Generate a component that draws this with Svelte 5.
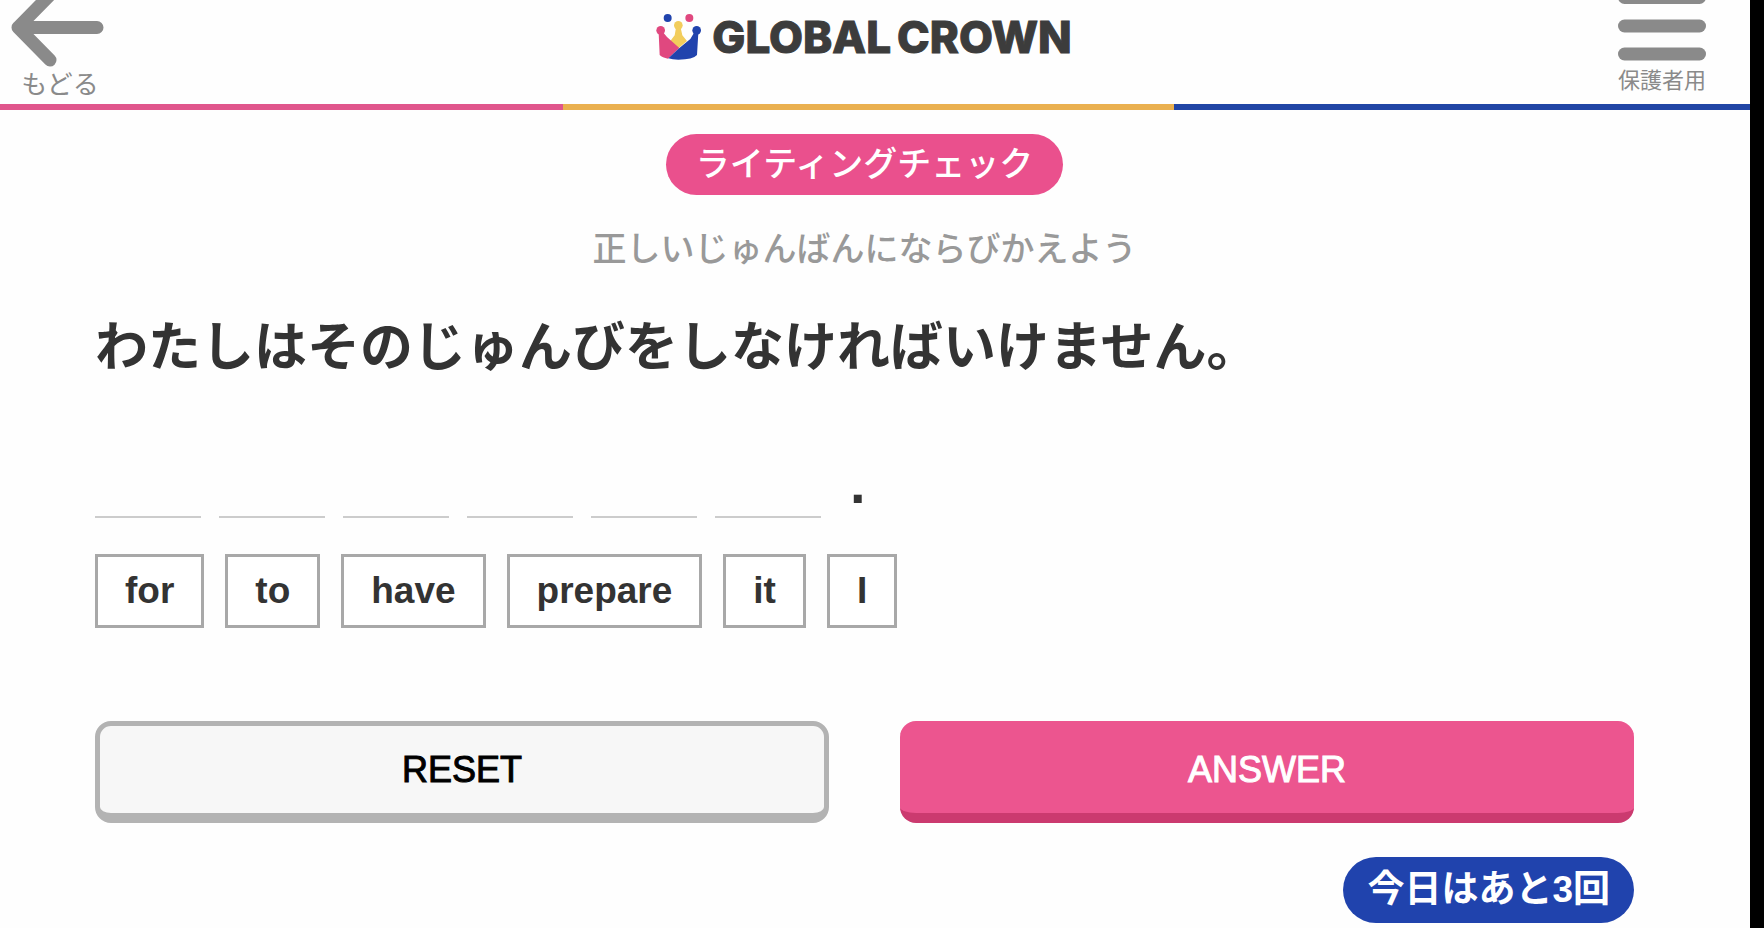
<script lang="ts">
  type Tile = { id: number; word: string }

  const tiles: Tile[] = ['for', 'to', 'have', 'prepare', 'it', 'I'].map((word, id) => ({ id, word }))
  const remaining = 3

  let picked: Tile[] = $state([])
  let rest = $derived(tiles.filter((tile) => !picked.some((p) => p.id === tile.id)))

  function pick(tile: Tile) {
    picked.push(tile)
  }

  function reset() {
    picked = []
  }
</script>

<div class="page">
  <header>
    <a class="back" href="#back">
      <svg width="94" height="68" viewBox="0 0 94 68" aria-hidden="true">
        <path d="M87 27.500H8L39 -4M8 27.500L40 60" />
      </svg>
      <span>もどる</span>
    </a>

    <a class="logo" href="#top">
      <svg width="46" height="48" viewBox="48 38 138 144" aria-hidden="true">
        <path fill="#f2cd5c" d="M108 82h14l5 23 14 17-26 22-24-22 13-17z" />
        <path fill="#e0487f" d="M56 98l13-2 12 14 37 33-34 32q-17-3-25-11z" />
        <path fill="#2043ad" d="M163 96l12 2-4 66q-12 14-56 14-18 0-30-4l34-32 32-26z" />
        <circle cx="83" cy="53" r="12" fill="#2043ad" />
        <circle cx="148" cy="53" r="12" fill="#e0487f" />
        <circle cx="115" cy="75" r="13" fill="#f2cd5c" />
        <circle cx="62" cy="90" r="13" fill="#e0487f" />
        <circle cx="170" cy="90" r="13" fill="#2043ad" />
      </svg>
      <span>GLOBAL</span><span class="crown">CROWN</span>
    </a>

    <button class="menu" type="button">
      <svg width="88" height="62" viewBox="0 0 88 62" aria-hidden="true">
        <rect y="-9" width="88" height="13" rx="6.500" />
        <rect y="19.500" width="88" height="13" rx="6.500" />
        <rect y="47.500" width="88" height="13" rx="6.500" />
      </svg>
      <span>保護者用</span>
    </button>
  </header>

  <div class="stripe">
    <i class="pink"></i>
    <i class="yellow"></i>
    <i class="blue"></i>
  </div>

  <main>
    <h1>ライティングチェック</h1>
    <p class="lead">正しいじゅんばんにならびかえよう</p>
    <h2>わたしはそのじゅんびをしなければいけません。</h2>

    <div class="blanks">
      {#each tiles as tile, i (tile.id)}
        <span class="blank">{picked[i]?.word ?? ''}</span>
      {/each}
      <span class="stop">.</span>
    </div>

    <div class="tiles">
      {#each rest as tile (tile.id)}
        <button class="tile" type="button" onclick={() => pick(tile)}>{tile.word}</button>
      {/each}
    </div>

    <div class="actions">
      <button class="reset" type="button" onclick={reset}>RESET</button>
      <button class="answer" type="button">ANSWER</button>
    </div>

    <p class="left">今日はあと{remaining}回</p>
  </main>
</div>

<style>
  :global(body) {
    background: #fefefe;
    color: #333;
    font-family: 'Liberation Sans', 'Noto Sans CJK JP', sans-serif;
  }

  .page {
    box-sizing: border-box;
    min-height: 100vh;
    border-right: 14px solid #000;
  }

  button {
    font-family: inherit;
    cursor: pointer;
  }

  header {
    display: grid;
    grid-template-columns: 1fr auto 1fr;
    align-items: start;
    height: 104px;
    padding: 0 32px 0 10px;
    overflow: hidden;
  }

  .back,
  .menu {
    display: flex;
    flex-direction: column;
    align-items: center;
    color: #8a8a8a;
    text-decoration: none;
  }

  .back {
    justify-self: start;
    font-size: 26px;
    line-height: 34px;
  }

  .back span {
    padding-left: 6px;
  }

  .back path {
    fill: none;
    stroke: #8a8a8a;
    stroke-width: 13;
    stroke-linecap: round;
    stroke-linejoin: round;
  }

  .menu {
    justify-self: end;
    padding: 0 12px;
    border: 0;
    background: none;
    font-size: 22px;
    line-height: 38px;
  }

  .menu rect {
    fill: #8a8a8a;
  }

  .logo {
    display: flex;
    align-items: center;
    padding-top: 13px;
    color: #3c3c3c;
    font-family: Inter, sans-serif;
    font-size: 44px;
    font-weight: 800;
    line-height: 48px;
    text-decoration: none;
    -webkit-text-stroke: 1px;
  }

  .logo svg {
    margin-right: 10px;
  }

  .crown {
    margin-left: 6px;
  }

  .stripe {
    display: grid;
    grid-template-columns: 563fr 611fr 576fr;
    height: 6px;
  }

  .pink {
    background: #e0558c;
  }

  .yellow {
    background: #eab04f;
  }

  .blue {
    background: #2145a5;
  }

  main {
    display: flex;
    flex-direction: column;
    padding: 24px 116px 4px 95px;
  }

  h1,
  h2,
  p {
    margin: 0;
  }

  h1 {
    align-self: center;
    padding: 0 30px;
    border-radius: 31px;
    background: #ea508d;
    color: #fff;
    font-size: 34px;
    font-weight: 500;
    line-height: 61px;
  }

  .lead {
    margin-top: 29px;
    color: #999;
    font-size: 34px;
    font-weight: 500;
    line-height: 50px;
    text-align: center;
  }

  h2 {
    margin-top: 38px;
    font-size: 53px;
    line-height: 72px;
  }

  .blanks {
    display: flex;
    gap: 18px;
    height: 64px;
    margin-top: 70px;
    font-weight: bold;
  }

  .blank {
    width: 106px;
    border-bottom: 2px solid #ccc;
    font-size: 28px;
    line-height: 64px;
    text-align: center;
  }

  .stop {
    padding-left: 11px;
    font-size: 56px;
    line-height: 60px;
  }

  .tiles {
    display: flex;
    gap: 21px;
    min-height: 74px;
    margin-top: 36px;
  }

  .tile {
    padding: 0 27px;
    border: 3px solid #a8a8a8;
    background: #fff;
    color: #333;
    font-size: 37px;
    font-weight: bold;
    line-height: 68px;
  }

  .actions {
    display: grid;
    grid-template-columns: 1fr 1fr;
    gap: 71px;
    margin-top: 93px;
  }

  .reset,
  .answer {
    padding: 0;
    border: 5px solid #b3b3b3;
    border-bottom-width: 10px;
    border-radius: 16px;
    background: #f7f7f7;
    color: #000;
    font-size: 36px;
    line-height: 87px;
    -webkit-text-stroke: 1px;
  }

  .answer {
    border-width: 5px 0 10px;
    border-color: #ec558f #ec558f #cb3a6f;
    background: #ec558f;
    color: #fff;
  }

  .left {
    align-self: flex-end;
    margin-top: 34px;
    padding: 0 24px;
    border-radius: 33px;
    background: #2043ad;
    color: #fff;
    font-size: 37px;
    font-weight: bold;
    line-height: 66px;
  }
</style>
